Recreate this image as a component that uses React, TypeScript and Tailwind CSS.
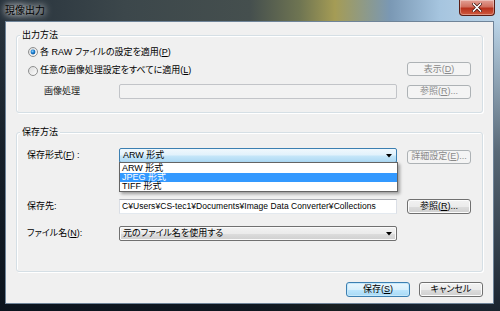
import type { ReactNode } from 'react';

const fontCls = "font-['Liberation_Sans','Noto_Sans_CJK_JP',sans-serif] [font-feature-settings:'palt']";

function U({ children }: { children: ReactNode }) {
  return <span className="underline underline-offset-[1px]">{children}</span>;
}

function Btn({
  children,
  kind = 'normal',
  className = '',
}: {
  children: ReactNode;
  kind?: 'normal' | 'disabled' | 'default';
  className?: string;
}) {
  const look =
    kind === 'disabled'
      ? 'border-[#adb2b5] bg-[#f4f4f4] text-[#8a8a8a]'
      : kind === 'default'
        ? 'border-[#3c7fb1] bg-[linear-gradient(180deg,#eaf6fd_0%,#d9f0fc_50%,#bee6fd_51%,#a7d9f5_100%)] text-black shadow-[inset_0_0_0_1px_#c5e8fb]'
        : 'border-[#707070] bg-[linear-gradient(180deg,#f2f2f2_0%,#ebebeb_50%,#dddddd_51%,#cfcfcf_100%)] text-black shadow-[inset_0_0_0_1px_#fcfcfc]';
  return (
    <div
      className={`flex w-[64px] shrink-0 items-center justify-center rounded-[3px] border text-[9px] leading-none ${look} ${className}`}
    >
      {children}
    </div>
  );
}

function Radio({ checked }: { checked?: boolean }) {
  return (
    <svg width="10" height="10" viewBox="0 0 10 10" className="shrink-0">
      <defs>
        <linearGradient id={checked ? 'rb1' : 'rb2'} x1="0" y1="0" x2="1" y2="1">
          <stop offset="0" stopColor="#d8d8d8" />
          <stop offset="1" stopColor="#ffffff" />
        </linearGradient>
        <radialGradient id="dot" cx="0.4" cy="0.35" r="0.7">
          <stop offset="0" stopColor="#8fd0ff" />
          <stop offset="0.5" stopColor="#1a7fd0" />
          <stop offset="1" stopColor="#0a4f94" />
        </radialGradient>
      </defs>
      <circle cx="5" cy="5" r="4.5" fill={`url(#${checked ? 'rb1' : 'rb2'})`} stroke="#8e8f8f" strokeWidth="1" />
      {checked && <circle cx="5" cy="5" r="2.4" fill="url(#dot)" />}
    </svg>
  );
}

function Arrow() {
  return (
    <svg width="6" height="4" viewBox="0 0 6 4" className="shrink-0">
      <path d="M0 0H6L3 3.5Z" fill="#000" />
    </svg>
  );
}

function Group({ title, className, children }: { title: string; className: string; children: ReactNode }) {
  return (
    <div className={`relative rounded-[3px] border border-[#d5dfe5] shadow-[inset_1px_1px_0_#fff,1px_1px_0_#fff] ${className}`}>
      <span className="absolute left-[3px] top-[-6px] bg-[#f0f0f0] px-[2px] text-[9px] leading-[11px] text-black">
        {title}
      </span>
      {children}
    </div>
  );
}

export default function App() {
  return (
    <div
      className={`flex h-[311px] w-[500px] flex-col overflow-hidden bg-[linear-gradient(90deg,#27323c_0%,#3c474b_25%,#454f4e_50%,#6f7552_60%,#a59c55_67%,#7a98b4_78%,#a6c5df_88%,#bcd5e8_100%)] ${fontCls}`}
    >
      {/* title bar */}
      <div className="flex h-[21px] shrink-0 items-start justify-between">
        <span className="ml-[5px] mt-[4px] text-[10px] leading-[13px] text-black [text-shadow:0_0_6px_#fff,0_0_10px_#fff]">
          現像出力
        </span>
        <div className="mr-[5px] flex h-[16px] w-[36px] items-center justify-center rounded-b-[4px] border border-t-0 border-[#5a1d14] bg-[linear-gradient(180deg,#e3a196_0%,#d0705f_45%,#b8321d_55%,#cf5a3e_100%)] shadow-[inset_0_0_0_1px_rgba(255,255,255,0.35)]">
          <svg width="10" height="9" viewBox="0 0 10 9">
            <path d="M1.5 1L8.5 8M8.5 1L1.5 8" stroke="#3a0f08" strokeWidth="3" strokeLinecap="square" />
            <path d="M1.5 1L8.5 8M8.5 1L1.5 8" stroke="#fff" strokeWidth="1.6" strokeLinecap="square" />
          </svg>
        </div>
      </div>

      {/* frame + client */}
      <div className="flex flex-1 bg-[linear-gradient(180deg,transparent_0%,rgba(8,16,26,0.55)_45%,rgba(8,16,26,0.9)_100%)] px-[5px] pb-[7px] pr-[6px]">
        <div className="flex flex-1 flex-col border border-[#6f8499] bg-[#f0f0f0] px-[10px] pt-[13px] text-[9px] text-black">
          {/* 出力方法 */}
          <Group title="出力方法" className="h-[78px] pl-[11px] pr-[11px]">
            <div className="mt-[11px] flex h-[10px] items-center gap-[2px]">
              <Radio checked />
              <span className="leading-none">
                各 RAW ファイルの設定を適用(<U>P</U>)
              </span>
            </div>
            <div className="mt-[5px] flex h-[14px] items-center justify-between">
              <div className="flex items-center gap-[2px] pt-[3px]">
                <Radio />
                <span className="leading-none">
                  任意の画像処理設定をすべてに適用(<U>L</U>)
                </span>
              </div>
              <Btn kind="disabled" className="h-[14px]">
                表示(<U>D</U>)
              </Btn>
            </div>
            <div className="mt-[8px] flex h-[15px] items-center">
              <span className="w-[91px] shrink-0 pl-[16px] leading-none text-[#222]">画像処理</span>
              <div className="h-[15px] w-[278px] shrink-0 rounded-[2px] border border-[#c2c4c8] bg-[#f2f2f2]" />
              <div className="flex-1" />
              <Btn kind="disabled" className="h-[14px]">
                参照(<U>R</U>)...
              </Btn>
            </div>
          </Group>

          {/* 保存方法 */}
          <Group title="保存方法" className="mt-[19px] h-[140px] pl-[10px] pr-[11px]">
            <div className="mt-[15px] flex h-[15px] items-center">
              <span className="w-[92px] shrink-0 leading-none">
                保存形式(<U>F</U>) :
              </span>
              <div className="relative h-[15px] w-[278px] shrink-0">
                <div className="flex h-full items-center justify-between rounded-[2px] border border-[#3c7fb1] bg-[linear-gradient(180deg,#f0f8fd_0%,#e2f2fc_45%,#c5e6f9_55%,#acd9f4_100%)] pl-[3px] pr-[4px]">
                  <span className="leading-none">ARW 形式</span>
                  <Arrow />
                </div>
                <div className="absolute left-0 top-[14px] z-10 w-[279px] border border-[#646464] bg-white shadow-[2px_2px_3px_rgba(0,0,0,0.35)]">
                  <div className="flex h-[10px] items-center pl-[2px] leading-none">ARW 形式</div>
                  <div className="flex h-[9px] items-center bg-[#3399ff] pl-[2px] leading-none text-white">JPEG 形式</div>
                  <div className="flex h-[9px] items-center pl-[2px] leading-none">TIFF 形式</div>
                </div>
              </div>
              <div className="flex-1" />
              <Btn kind="disabled" className="mt-[2px] h-[14px]">
                詳細設定(<U>E</U>)...
              </Btn>
            </div>

            <div className="mt-[36px] flex h-[15px] items-center">
              <span className="w-[92px] shrink-0 leading-none">保存先:</span>
              <div className="flex h-[15px] w-[278px] shrink-0 items-center border border-[#abadb3] border-b-[#e3e9ef] border-x-[#dbdfe6] bg-white pl-[2px] text-[8.5px] leading-none tracking-[0.05px]">
                C¥Users¥CS-tec1¥Documents¥Image Data Converter¥Collections
              </div>
              <div className="flex-1" />
              <Btn className="h-[15px]">
                参照(<U>R</U>)...
              </Btn>
            </div>

            <div className="mt-[12px] flex h-[15px] items-center">
              <span className="w-[92px] shrink-0 leading-none">
                ファイル名(<U>N</U>):
              </span>
              <div className="flex h-[15px] w-[278px] shrink-0 items-center justify-between rounded-[2px] border border-[#707070] bg-[linear-gradient(180deg,#f2f2f2_0%,#ebebeb_50%,#dddddd_51%,#cfcfcf_100%)] pl-[3px] pr-[4px] shadow-[inset_0_0_0_1px_#fafafa]">
                <span className="leading-none">元のファイル名を使用する</span>
                <Arrow />
              </div>
            </div>
          </Group>

          <div className="mt-[10px] flex justify-end gap-[9px]">
            <Btn kind="default" className="h-[15px]">
              保存(<U>S</U>)
            </Btn>
            <Btn className="h-[15px]">キャンセル</Btn>
          </div>
        </div>
      </div>
    </div>
  );
}
